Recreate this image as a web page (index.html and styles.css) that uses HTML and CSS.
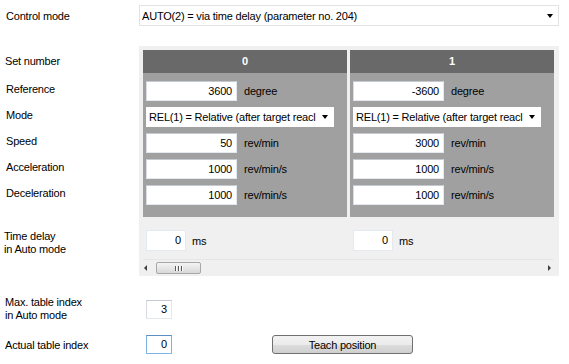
FILE: index.html
```html
<!DOCTYPE html>
<html lang="en">
<head>
    <meta charset="UTF-8">
    <title>Positioning table</title>
    <link rel="stylesheet" href="styles.css">
</head>
<body>
    <div class="form">
        <div class="top-row">
            <div class="lbl top-lbl">Control mode</div>
            <div class="combo wide">
                <span class="combo-text">AUTO(2) = via time delay (parameter no. 204)</span>
                <span class="arrow"></span>
            </div>
        </div>

        <div class="main">
            <!-- row captions, lined up with the set columns -->
            <div class="labels">
                <div class="lbl head-lbl">Set number</div>
                <div class="lbl row-lbl first">Reference</div>
                <div class="lbl row-lbl">Mode</div>
                <div class="lbl row-lbl">Speed</div>
                <div class="lbl row-lbl">Acceleration</div>
                <div class="lbl row-lbl">Deceleration</div>
                <div class="lbl two-line delay-lbl">Time delay<br>in Auto mode</div>
            </div>

            <div class="panel">
                <div class="sets">
                    <div class="set">
                        <div class="set-head">0</div>
                        <div class="set-body">
                            <div class="field"><div class="box num">3600</div><span class="unit">degree</span></div>
                            <div class="field">
                                <div class="combo mode">
                                    <span class="combo-text">REL(1) = Relative (after target reacl</span>
                                    <span class="arrow"></span>
                                </div>
                            </div>
                            <div class="field"><div class="box num">50</div><span class="unit">rev/min</span></div>
                            <div class="field"><div class="box num">1000</div><span class="unit">rev/min/s</span></div>
                            <div class="field"><div class="box num">1000</div><span class="unit">rev/min/s</span></div>
                        </div>
                    </div>
                    <div class="set">
                        <div class="set-head">1</div>
                        <div class="set-body">
                            <div class="field"><div class="box num">-3600</div><span class="unit">degree</span></div>
                            <div class="field">
                                <div class="combo mode">
                                    <span class="combo-text">REL(1) = Relative (after target reacl</span>
                                    <span class="arrow"></span>
                                </div>
                            </div>
                            <div class="field"><div class="box num">3000</div><span class="unit">rev/min</span></div>
                            <div class="field"><div class="box num">1000</div><span class="unit">rev/min/s</span></div>
                            <div class="field"><div class="box num">1000</div><span class="unit">rev/min/s</span></div>
                        </div>
                    </div>
                </div>

                <div class="delays">
                    <div class="delay"><div class="box ms-box">0</div><span class="unit ms">ms</span></div>
                    <div class="delay"><div class="box ms-box">0</div><span class="unit ms">ms</span></div>
                </div>

                <div class="hscroll">
                    <span class="sb-arrow left"></span>
                    <div class="thumb"><span class="grip"></span><span class="grip"></span><span class="grip"></span></div>
                    <span class="sb-arrow right"></span>
                </div>
            </div>
        </div>

        <div class="bottom-row max-row">
            <div class="lbl two-line bottom-lbl">Max. table index<br>in Auto mode</div>
            <div class="box idx">3</div>
        </div>
        <div class="bottom-row actual-row">
            <div class="lbl bottom-lbl">Actual table index</div>
            <div class="box idx focused">0</div>
            <button class="teach">Teach position</button>
        </div>
    </div>
</body>
</html>
```

FILE: styles.css
```css
body {
    margin: 0;
    background: #ffffff;
    font-family: "Liberation Sans", Arial, sans-serif;
    font-size: 11px;
    letter-spacing: -0.2px;
    color: #000000;
}

.lbl {
    box-sizing: border-box;
    padding-left: 6px;
    white-space: nowrap;
}

/* Control mode */
.top-row {
    display: flex;
    align-items: center;
    padding-top: 5px;
}

.top-lbl {
    width: 139px;
}

.combo {
    box-sizing: border-box;
    display: flex;
    align-items: center;
    background: #ffffff;
    border: 1px solid #e3e3e3;
    overflow: hidden;
}

.combo-text {
    flex: 1;
    overflow: hidden;
    white-space: nowrap;
}

.combo .arrow {
    width: 17px;
    height: 100%;
    flex: none;
    display: flex;
    align-items: center;
    justify-content: center;
}

.combo .arrow::after {
    content: "";
    border-left: 3.5px solid transparent;
    border-right: 3.5px solid transparent;
    border-top: 4px solid #000000;
}

.combo.wide {
    width: 420px;
    height: 21px;
    padding-left: 2px;
}

/* Table area */
.main {
    display: flex;
    margin-top: 20px;
}

.labels {
    width: 139px;
    padding-top: 4px;
}

.head-lbl {
    height: 23px;
    line-height: 23px;
    padding-left: 5px;
}

.row-lbl {
    height: 26px;
    line-height: 26px;
}

.row-lbl.first {
    margin-top: 3px;
}

.two-line {
    line-height: 13px;
}

.delay-lbl {
    margin-top: 24px;
    padding-left: 4px;
}

.panel {
    box-sizing: border-box;
    width: 420px;
    height: 230px;
    background: #f0f0f0;
    padding: 4px 5px 0 4px;
}

.sets,
.delays {
    display: grid;
    grid-template-columns: 204px 204px;
    column-gap: 3px;
}

.set-head {
    height: 23px;
    line-height: 23px;
    background: #696969;
    color: #ffffff;
    font-weight: bold;
    text-align: center;
}

.set-body {
    background: #a0a0a0;
    padding: 8px 0 12px 3px;
    display: flex;
    flex-direction: column;
    gap: 6px;
}

.field {
    display: flex;
    align-items: center;
    height: 20px;
}

.box {
    box-sizing: border-box;
    background: #ffffff;
    border: 1px solid #e3e9ef;
    border-top-color: #c4c8d0;
    border-left-color: #d9dce3;
    text-align: right;
    padding-right: 4px;
    white-space: nowrap;
}

.num {
    width: 91px;
    height: 20px;
    line-height: 18px;
}

.unit {
    margin-left: 7px;
    white-space: nowrap;
}

.combo.mode {
    width: 188px;
    height: 20px;
    padding-left: 2px;
    border-color: #ffffff;
}

.delays {
    margin-top: 13px;
}

.delay {
    display: flex;
    align-items: center;
    padding-left: 3px;
    height: 21px;
}

.ms-box {
    width: 40px;
    height: 21px;
    line-height: 19px;
    border-color: #e3e9ef;
}

.unit.ms {
    margin-left: 6px;
}

/* Horizontal scroll bar */
.hscroll {
    box-sizing: border-box;
    margin-top: 8px;
    height: 17px;
    width: 411px;
    border-top: 1px solid #e6e6e6;
    background: #f0f0f0;
    display: flex;
    align-items: center;
}

.sb-arrow {
    width: 0;
    height: 0;
    border-top: 3px solid transparent;
    border-bottom: 3px solid transparent;
}

.sb-arrow.left {
    margin-left: 1px;
    border-right: 3px solid #404040;
}

.sb-arrow.right {
    margin-left: auto;
    margin-right: 3px;
    border-left: 3px solid #404040;
}

.thumb {
    box-sizing: border-box;
    margin-left: 9px;
    width: 45px;
    height: 12px;
    border: 1px solid #a7a7a7;
    border-radius: 2px;
    background: linear-gradient(#f4f4f4, #e6e6e6 50%, #d8d8d8);
    display: flex;
    align-items: center;
    justify-content: center;
    gap: 1px;
}

.grip {
    width: 1px;
    height: 5px;
    background: #5a5a5a;
    box-shadow: 1px 0 0 #ffffff;
    margin-right: 1px;
}

/* Index rows */
.bottom-row {
    display: flex;
    align-items: center;
}

.bottom-lbl {
    width: 146px;
    padding-left: 5px;
}

.max-row {
    margin-top: 20px;
}

.actual-row {
    margin-top: 13px;
}

.idx {
    width: 26px;
    height: 19px;
    line-height: 17px;
    padding-right: 4px;
}

.idx.focused {
    border-color: #7eb4ea;
    border-top-color: #5d8fc5;
}

.teach {
    box-sizing: border-box;
    margin-left: 100px;
    width: 141px;
    height: 19px;
    padding: 0;
    font-family: "Liberation Sans", Arial, sans-serif;
    font-size: 11px;
    letter-spacing: -0.2px;
    color: #000000;
    border: 1px solid #707070;
    border-radius: 3px;
    background: linear-gradient(#f2f2f2, #ebebeb 50%, #dddddd 51%, #cfcfcf);
}
```
